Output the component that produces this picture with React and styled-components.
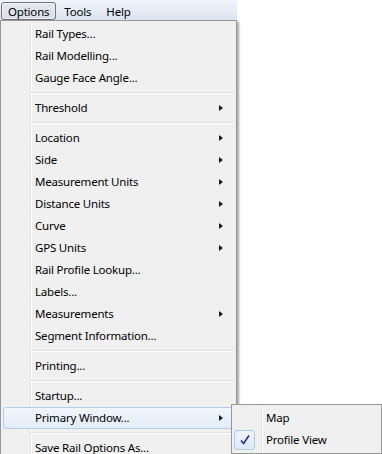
import React from "react";
import styled, { createGlobalStyle, css } from "styled-components";

const GlobalStyle = createGlobalStyle`
  html, body { margin: 0; padding: 0; background: #fff; }
  body {
    font-family: "Noto Sans", "Open Sans", sans-serif;
    font-size: 11.5px;
    letter-spacing: -0.2px;
    color: #000;
  }
`;

const Screen = styled.div`
  position: relative;
  width: 382px;
  height: 454px;
  overflow: hidden;
  background: #fff;
`;

const MenuBar = styled.div`
  display: flex;
  align-items: center;
  gap: 1px;
  width: 237px;
  height: 20px;
  box-sizing: border-box;
  padding: 1px 0 0 1px;
  background: linear-gradient(#f1f5fb 0%, #e8eef7 40%, #dbe3f0 100%);
`;

const MenuTitle = styled.div`
  height: 18px;
  box-sizing: border-box;
  padding: 0 6px;
  line-height: 17px;
  border: 1px solid transparent;
  border-radius: 3px;
  ${(p) =>
    p.$active &&
    css`
      border-color: #707070;
      background: linear-gradient(#e4e8ee, #d9dfe8);
      box-shadow: inset 0 0 0 1px rgba(255, 255, 255, 0.5);
    `}
`;

const Menu = styled.div`
  position: absolute;
  left: ${(p) => p.$left}px;
  top: ${(p) => p.$top}px;
  width: ${(p) => p.$width}px;
  box-sizing: border-box;
  padding: 2px;
  background: #f0f0f0;
  border: 1px solid #979797;
  box-shadow: 2px 2px 2px rgba(0, 0, 0, 0.35);

  &::before {
    content: "";
    position: absolute;
    top: 0;
    bottom: 0;
    left: 29px;
    width: 1px;
    background: #e2e3e3;
    box-shadow: 1px 0 0 #fff;
  }
`;

const Item = styled.div`
  position: relative;
  display: grid;
  grid-template-columns: 31px 1fr 14px;
  align-items: center;
  height: 22px;
  box-sizing: border-box;
  border: 1px solid transparent;
  border-radius: 3px;
  white-space: nowrap;
  ${(p) =>
    p.$hot &&
    css`
      border-color: #b1cbea;
      background: linear-gradient(#f1f6fc, #e3ecf8);
    `}
`;

const Label = styled.span`
  grid-column: 2;
  line-height: 20px;
`;

const Arrow = styled.span`
  grid-column: 3;
  justify-self: start;
  width: 0;
  height: 0;
  border-left: 4px solid #1a1a1a;
  border-top: 3.5px solid transparent;
  border-bottom: 3.5px solid transparent;
`;

const CheckBox = styled.span`
  grid-column: 1;
  display: flex;
  align-items: center;
  justify-content: center;
  width: 21px;
  height: 20px;
  margin-left: -1px;
  box-sizing: border-box;
  border: 1px solid #b1cbea;
  border-radius: 3px;
  background: linear-gradient(#eef4fc, #dfe9f7);
`;

const Separator = styled.div`
  height: 8px;
  margin-left: 28px;
  position: relative;

  &::after {
    content: "";
    position: absolute;
    left: 0;
    right: 0;
    top: 3px;
    height: 1px;
    background: #e0e0e0;
    box-shadow: 0 1px 0 #fff;
  }
`;

const mainItems = [
  ["Rail Types..."],
  ["Rail Modelling..."],
  ["Gauge Face Angle..."],
  "-",
  ["Threshold", true],
  "-",
  ["Location", true],
  ["Side", true],
  ["Measurement Units", true],
  ["Distance Units", true],
  ["Curve", true],
  ["GPS Units", true],
  ["Rail Profile Lookup..."],
  ["Labels..."],
  ["Measurements", true],
  ["Segment Information..."],
  "-",
  ["Printing..."],
  "-",
  ["Startup..."],
  ["Primary Window...", true, true],
  "-",
  ["Save Rail Options As..."],
];

const Check = () => (
  <svg width="12" height="12" viewBox="0 0 12 12">
    <path d="M2 6.5 L4.6 9.5 L10 1.5" fill="none" stroke="#1f2d9c" strokeWidth="1.6" />
  </svg>
);

export default function App() {
  return (
    <>
      <GlobalStyle />
      <Screen>
        <MenuBar>
          <MenuTitle $active>Options</MenuTitle>
          <MenuTitle>Tools</MenuTitle>
          <MenuTitle>Help</MenuTitle>
        </MenuBar>
        <Menu $left={0} $top={20} $width={237}>
          {mainItems.map((it, i) =>
            it === "-" ? (
              <Separator key={i} />
            ) : (
              <Item key={i} $hot={it[2]}>
                <Label>{it[0]}</Label>
                {it[1] && <Arrow />}
              </Item>
            )
          )}
        </Menu>
        <Menu $left={231} $top={404} $width={151}>
          <Item>
            <Label>Map</Label>
          </Item>
          <Item>
            <CheckBox>
              <Check />
            </CheckBox>
            <Label>Profile View</Label>
          </Item>
        </Menu>
      </Screen>
    </>
  );
}
